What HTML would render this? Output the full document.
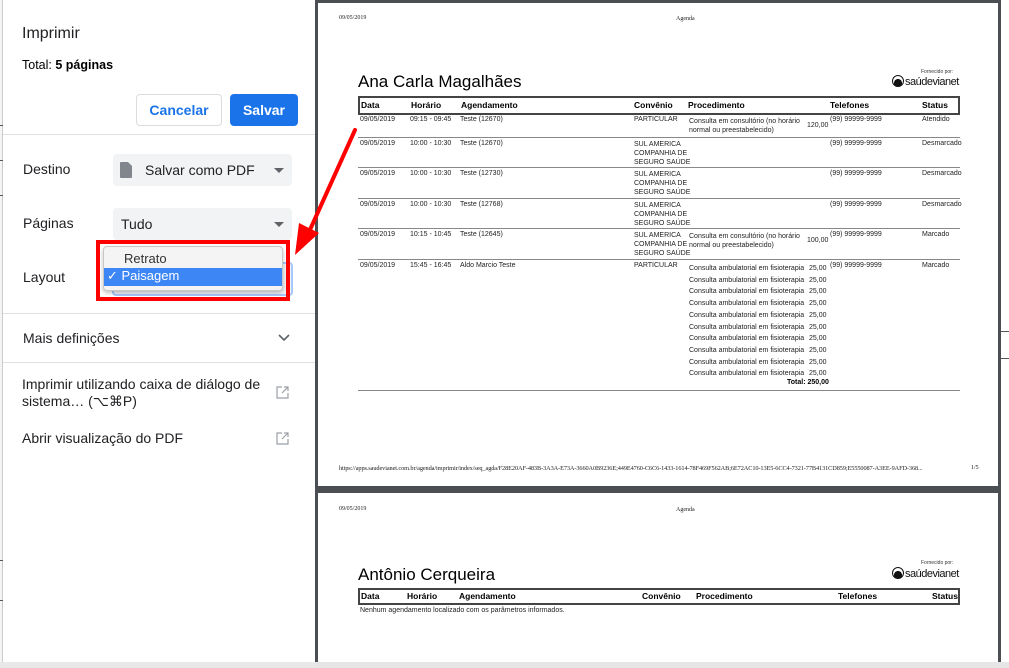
<!DOCTYPE html>
<html><head><meta charset="utf-8">
<style>
*{margin:0;padding:0;box-sizing:border-box}
body{width:1009px;height:668px;overflow:hidden;background:#fff;position:relative;font-family:"Liberation Sans",sans-serif;color:#202124}
.a{position:absolute;white-space:nowrap}
.pg{position:absolute;background:#fff}
.s{font-size:7px;color:#222}
.h{font-size:8.5px;font-weight:bold;color:#000}
.ln{position:absolute;left:358px;width:602px;height:1px;background:#888}
.sel{position:absolute;left:113px;width:179px;height:32px;background:#f1f3f4;border-radius:4px;font-size:14px}
.tri{position:absolute;right:8px;top:14px;width:0;height:0;border-left:5px solid transparent;border-right:5px solid transparent;border-top:5px solid #5f6368}
.lbl{font-size:14px;color:#202124}
.tm{font-family:"Liberation Serif",serif;font-size:6px;color:#222}
.logo{font-size:11px;color:#111;letter-spacing:-.5px}
.logo span{display:inline-block;width:12px;height:12px;border:1.5px solid #111;border-radius:50%;vertical-align:-2px;margin-right:1px;background:radial-gradient(circle at 50% 70%,#111 45%,transparent 48%)}
</style></head><body>
<div class="a" style="left:0;top:0;width:3px;height:668px;background:#f4f4f4;border-right:1px solid #ccc"></div>
<div class="a" style="left:0;top:125px;width:3px;height:1px;background:#555"></div>
<div class="a" style="left:0;top:160px;width:3px;height:1px;background:#555"></div>
<div class="a" style="left:0;top:195px;width:3px;height:1px;background:#555"></div>
<div class="a" style="left:0;top:560px;width:3px;height:1px;background:#555"></div>
<div class="a" style="left:0;top:600px;width:3px;height:1px;background:#555"></div>
<div class="a" style="left:22px;top:25px;font-size:16px">Imprimir</div>
<div class="a" style="left:22px;top:58px;font-size:12.5px;color:#000">Total: <b>5 páginas</b></div>
<div class="a" style="left:136px;top:94px;width:86px;height:32px;border:1px solid #dadce0;border-radius:4px;color:#1a73e8;font-size:14px;font-weight:bold;text-align:center;line-height:30px">Cancelar</div>
<div class="a" style="left:230px;top:94px;width:68px;height:32px;background:#1a73e8;border-radius:4px;color:#fff;font-size:14px;font-weight:bold;text-align:center;line-height:32px">Salvar</div>
<div class="a" style="left:3px;top:134px;width:312px;height:1px;background:#e0e0e0"></div>
<div class="a lbl" style="left:23px;top:161px">Destino</div>
<div class="sel" style="top:154px"><svg class="a" style="left:7px;top:8px" width="12" height="16"><path d="M0 1Q0 0 1 0H8L12 4V15Q12 16 11 16H1Q0 16 0 15Z" fill="#80868b"/></svg><span class="a" style="left:32px;top:8px">Salvar como PDF</span><div class="tri"></div></div>
<div class="a lbl" style="left:23px;top:215px">Páginas</div>
<div class="sel" style="top:208px"><span class="a" style="left:8px;top:8px">Tudo</span><div class="tri"></div></div>
<div class="a lbl" style="left:23px;top:269px">Layout</div>
<div class="a" style="left:112px;top:262px;width:181px;height:34px;border:2px solid #a8c7fa;border-radius:4px;background:#f1f3f4"></div>
<div class="a" style="left:103px;top:246px;width:180px;height:45px;background:#f4f4f4;border:1px solid #c8c8c8;border-radius:4px;box-shadow:0 2px 4px rgba(0,0,0,.25)"></div>
<div class="a" style="left:124px;top:251px;font-size:13px;color:#333">Retrato</div>
<div class="a" style="left:104px;top:268px;width:178px;height:18px;background:#3d86f5"></div>
<div class="a" style="left:107px;top:268px;font-size:13px;color:#fff">✓ Paisagem</div>
<div class="a" style="left:96px;top:240px;width:194px;height:61px;border:4px solid #f00"></div>
<div class="a" style="left:3px;top:313px;width:312px;height:1px;background:#e0e0e0"></div>
<div class="a lbl" style="left:23px;top:330px">Mais definições</div>
<svg class="a" style="left:278px;top:334px" width="12" height="8"><path d="M1 1L6 6L11 1" stroke="#5f6368" stroke-width="1.6" fill="none"/></svg>
<div class="a" style="left:3px;top:362px;width:312px;height:1px;background:#e0e0e0"></div>
<div class="a lbl" style="left:22px;top:376px;line-height:17px">Imprimir utilizando caixa de diálogo de<br>sistema… (⌥⌘P)</div>
<div class="a lbl" style="left:22px;top:430px">Abrir visualização do PDF</div>
<svg class="a" style="left:276px;top:386px" width="13" height="13"><path d="M6 1H1V12H12V7M8 1H12V5M12 1L6 7" stroke="#9aa0a6" stroke-width="1.2" fill="none"/></svg>
<svg class="a" style="left:276px;top:432px" width="13" height="13"><path d="M6 1H1V12H12V7M8 1H12V5M12 1L6 7" stroke="#9aa0a6" stroke-width="1.2" fill="none"/></svg>
<div class="a" style="left:0;top:662px;width:315px;height:6px;background:#e8e8e8"></div>
<div class="a" style="left:315px;top:0;width:694px;height:662px;background:#4b4e52"></div>
<div class="a" style="left:1001px;top:0;width:8px;height:662px;background:#fff"></div>
<div class="a" style="left:1001px;top:331px;width:8px;height:1px;background:#555"></div>
<div class="a" style="left:1001px;top:358px;width:8px;height:1px;background:#555"></div>
<div class="a" style="left:315px;top:662px;width:694px;height:6px;background:#e6e6e6"></div>
<div class="pg" style="left:318px;top:3px;width:680px;height:483px"></div>
<div class="pg" style="left:318px;top:493px;width:680px;height:169px"></div>
<div class="a tm" style="left:339px;top:15px">09/05/2019</div>
<div class="a tm" style="left:676px;top:16px">Agenda</div>
<div class="a" style="left:358px;top:72px;font-size:17px;color:#000">Ana Carla Magalhães</div>
<div class="a" style="left:921px;top:69px;font-size:5px;color:#333">Fornecido por:</div>
<div class="a logo" style="left:892px;top:75px"><span></span>saúdevianet</div>
<div class="a" style="left:358px;top:96px;width:602px;height:19px;border:2px solid #444"></div>
<div class="a h" style="left:361px;top:100px">Data</div>
<div class="a h" style="left:411px;top:100px">Horário</div>
<div class="a h" style="left:461px;top:100px">Agendamento</div>
<div class="a h" style="left:634px;top:100px">Convênio</div>
<div class="a h" style="left:688px;top:100px">Procedimento</div>
<div class="a h" style="left:830px;top:100px">Telefones</div>
<div class="a h" style="left:922px;top:100px">Status</div>
<div class="ln" style="top:137px"></div><div class="ln" style="top:167px"></div><div class="ln" style="top:198px"></div><div class="ln" style="top:228px"></div><div class="ln" style="top:259px"></div><div class="ln" style="top:390px"></div>
<div class="a s" style="left:360px;top:116px">09/05/2019</div>
<div class="a s" style="left:410px;top:116px">09:15 - 09:45</div>
<div class="a s" style="left:460px;top:116px">Teste (12670)</div>
<div class="a s" style="left:634px;top:116px">PARTICULAR</div>
<div class="a s" style="left:689px;top:117px;line-height:9px">Consulta em consultório (no horário<br>normal ou preestabelecido)</div>
<div class="a s" style="left:807px;top:122px">120,00</div>
<div class="a s" style="left:830px;top:116px">(99) 99999-9999</div>
<div class="a s" style="left:922px;top:116px">Atendido</div>
<div class="a s" style="left:360px;top:140px">09/05/2019</div><div class="a s" style="left:410px;top:140px">10:00 - 10:30</div><div class="a s" style="left:460px;top:140px">Teste (12670)</div>
<div class="a s" style="left:634px;top:140px;line-height:9px">SUL AMERICA<br>COMPANHIA DE<br>SEGURO SAÚDE</div>
<div class="a s" style="left:830px;top:140px">(99) 99999-9999</div><div class="a s" style="left:922px;top:140px">Desmarcado</div>
<div class="a s" style="left:360px;top:170px">09/05/2019</div><div class="a s" style="left:410px;top:170px">10:00 - 10:30</div><div class="a s" style="left:460px;top:170px">Teste (12730)</div>
<div class="a s" style="left:634px;top:170px;line-height:9px">SUL AMERICA<br>COMPANHIA DE<br>SEGURO SAÚDE</div>
<div class="a s" style="left:830px;top:170px">(99) 99999-9999</div><div class="a s" style="left:922px;top:170px">Desmarcado</div>
<div class="a s" style="left:360px;top:201px">09/05/2019</div><div class="a s" style="left:410px;top:201px">10:00 - 10:30</div><div class="a s" style="left:460px;top:201px">Teste (12768)</div>
<div class="a s" style="left:634px;top:201px;line-height:9px">SUL AMERICA<br>COMPANHIA DE<br>SEGURO SAÚDE</div>
<div class="a s" style="left:830px;top:201px">(99) 99999-9999</div><div class="a s" style="left:922px;top:201px">Desmarcado</div>
<div class="a s" style="left:360px;top:231px">09/05/2019</div><div class="a s" style="left:410px;top:231px">10:15 - 10:45</div><div class="a s" style="left:460px;top:231px">Teste (12645)</div>
<div class="a s" style="left:634px;top:231px;line-height:9px">SUL AMERICA<br>COMPANHIA DE<br>SEGURO SAÚDE</div>
<div class="a s" style="left:689px;top:232px;line-height:9px">Consulta em consultório (no horário<br>normal ou preestabelecido)</div>
<div class="a s" style="left:807px;top:237px">100,00</div>
<div class="a s" style="left:830px;top:231px">(99) 99999-9999</div><div class="a s" style="left:922px;top:231px">Marcado</div>
<div class="a s" style="left:360px;top:262px">09/05/2019</div><div class="a s" style="left:410px;top:262px">15:45 - 16:45</div><div class="a s" style="left:460px;top:262px">Aldo Marcio Teste</div>
<div class="a s" style="left:634px;top:262px">PARTICULAR</div>
<div class="a s" style="left:689px;top:263px;line-height:11.7px">Consulta ambulatorial em fisioterapia<br>Consulta ambulatorial em fisioterapia<br>Consulta ambulatorial em fisioterapia<br>Consulta ambulatorial em fisioterapia<br>Consulta ambulatorial em fisioterapia<br>Consulta ambulatorial em fisioterapia<br>Consulta ambulatorial em fisioterapia<br>Consulta ambulatorial em fisioterapia<br>Consulta ambulatorial em fisioterapia<br>Consulta ambulatorial em fisioterapia</div>
<div class="a s" style="left:809px;top:263px;line-height:11.7px">25,00<br>25,00<br>25,00<br>25,00<br>25,00<br>25,00<br>25,00<br>25,00<br>25,00<br>25,00</div>
<div class="a s" style="left:787px;top:379px;font-weight:bold;color:#000">Total: 250,00</div>
<div class="a s" style="left:830px;top:262px">(99) 99999-9999</div><div class="a s" style="left:922px;top:262px">Marcado</div>
<div class="a tm" style="left:339px;top:465px;font-size:6.3px;letter-spacing:-.1px">https://apps.saudevianet.com.br/agenda/imprimir/index/seq_agda/F28E20AF-483B-3A3A-E73A-3660A0B9236E;449E4760-C6C6-1433-1614-78F469F562AB;6E72AC10-13E5-6CC4-7321-77B4131CD859;E5550087-A3EE-9AFD-368...</div>
<div class="a tm" style="left:971px;top:465px;font-size:6px">1/5</div>
<div class="a tm" style="left:339px;top:506px">09/05/2019</div>
<div class="a tm" style="left:676px;top:507px">Agenda</div>
<div class="a" style="left:358px;top:565px;font-size:17px;color:#000">Antônio Cerqueira</div>
<div class="a" style="left:921px;top:560px;font-size:5px;color:#333">Fornecido por:</div>
<div class="a logo" style="left:892px;top:567px"><span></span>saúdevianet</div>
<div class="a" style="left:358px;top:588px;width:602px;height:17px;border:2px solid #444"></div>
<div class="a h" style="left:361px;top:591px">Data</div>
<div class="a h" style="left:407px;top:591px">Horário</div>
<div class="a h" style="left:459px;top:591px">Agendamento</div>
<div class="a h" style="left:642px;top:591px">Convênio</div>
<div class="a h" style="left:696px;top:591px">Procedimento</div>
<div class="a h" style="left:838px;top:591px">Telefones</div>
<div class="a h" style="left:932px;top:591px">Status</div>
<div class="a s" style="left:360px;top:607px">Nenhum agendamento localizado com os parâmetros informados.</div>
<svg class="a" style="left:285px;top:120px" width="80" height="145"><path d="M70 10L24 112" stroke="#f00" stroke-width="4" stroke-linecap="round"/><path d="M10 135L14 103L34 113Z" fill="#f00"/></svg>
</body></html>
